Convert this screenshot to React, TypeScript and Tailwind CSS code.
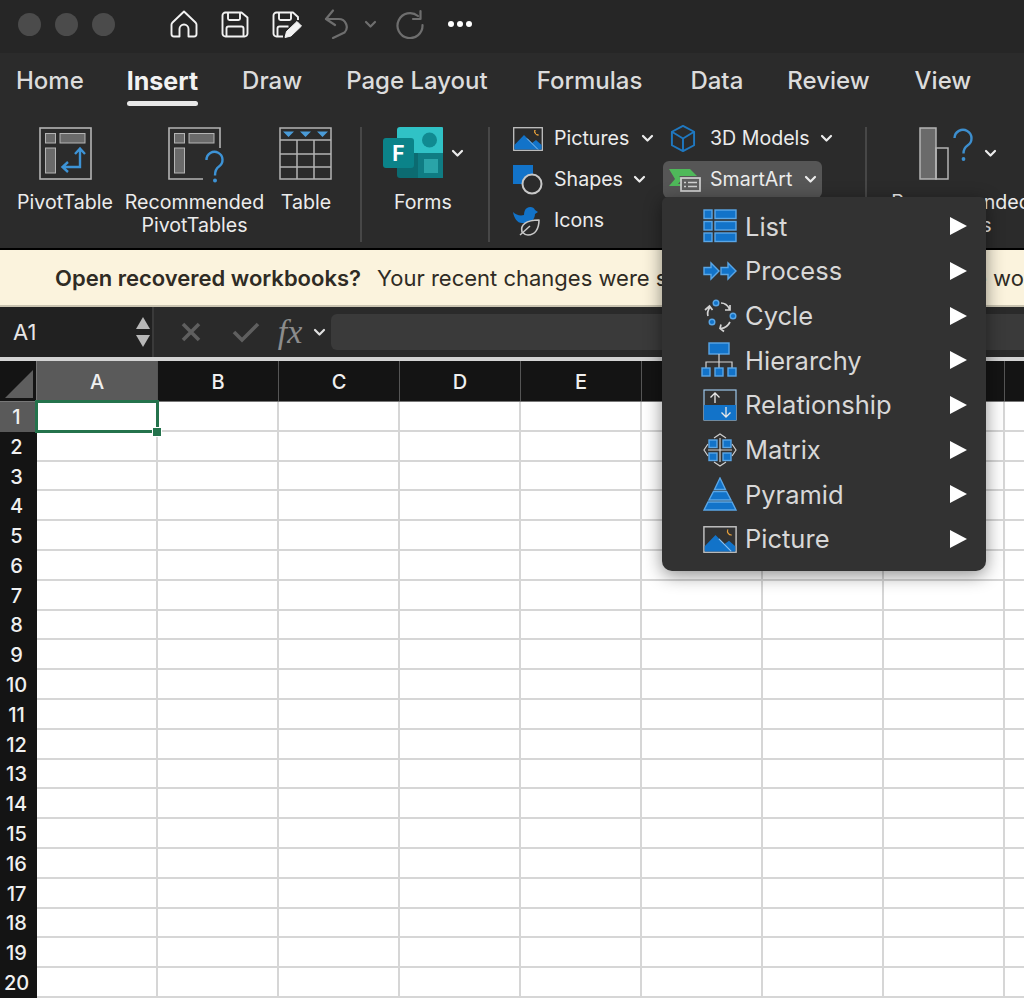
import type { ReactNode } from "react";

const BLUE = "#1273c9";
const LIGHT = "#5aa6e6";
const GRAY = "#b4b4b4";
const MID = "#6a6a6a";

const COLUMNS = ["A", "B", "C", "D", "E", "F", "G", "H", "I"];
const ROWS = Array.from({ length: 20 }, (_, i) => i + 1);
const TABS = [
  { name: "Home", className: "text-[24px] font-medium" },
  { name: "Insert", className: "ml-[43px] text-[25px] font-bold text-[#f2f2f2]" },
  { name: "Draw", className: "ml-[44px] text-[24px] font-medium" },
  { name: "Page Layout", className: "ml-[44px] text-[24px] font-medium" },
  { name: "Formulas", className: "ml-[49px] text-[24px] font-medium" },
  { name: "Data", className: "ml-[48px] text-[24px] font-medium" },
  { name: "Review", className: "ml-[44px] text-[24px] font-medium" },
  { name: "View", className: "ml-[45px] text-[24px] font-medium" },
];

function Chevron({ className = "" }: { className?: string }) {
  return (
    <svg width="13" height="9" viewBox="0 0 13 9" className={`shrink-0 ${className}`}>
      <path d="M2 2l4.500 4.500L11 2" fill="none" stroke="currentColor" strokeWidth="2.200" strokeLinecap="round" strokeLinejoin="round" />
    </svg>
  );
}

function HomeIcon() {
  return (
    <svg width="28" height="28" viewBox="0 0 28 28" fill="none" stroke="#f2f2f2" strokeWidth="1.900" strokeLinejoin="round">
      <path d="M14 1.500L2.500 12.500c-.7.7-1 1.300-1 2.300V24a2.500 2.500 0 0 0 2.500 2.500h5.500V19a4.500 4.500 0 0 1 9 0v7.500H24a2.500 2.500 0 0 0 2.500-2.500v-9.200c0-1-.3-1.600-1-2.300z" />
    </svg>
  );
}

function SaveIcon() {
  return (
    <svg width="28" height="28" viewBox="0 0 28 28" fill="none" stroke="#f2f2f2" strokeWidth="1.900" strokeLinejoin="round">
      <path d="M4 2.500h16.500l6 5v16a3 3 0 0 1-3 3h-19a3 3 0 0 1-3-3v-18a3 3 0 0 1 3-3z" />
      <path d="M7 2.500v6a1.500 1.500 0 0 0 1.500 1.500h9a1.500 1.500 0 0 0 1.500-1.500v-6" />
      <path d="M5.500 26.500v-8a2 2 0 0 1 2-2h13a2 2 0 0 1 2 2v8" />
    </svg>
  );
}

function SaveEditIcon() {
  return (
    <svg width="30" height="28" viewBox="0 0 30 28" fill="none" stroke="#f2f2f2" strokeWidth="1.900" strokeLinejoin="round">
      <path d="M11 26.500H4.500a3 3 0 0 1-3-3v-18a3 3 0 0 1 3-3H21l5 4.500v3" />
      <path d="M7 2.500v6A1.500 1.500 0 0 0 8.500 10h9A1.500 1.500 0 0 0 19 8.500v-6" />
      <path d="M5.500 26.500v-8a2 2 0 0 1 2-2h9" />
      <path d="M13 27.500l1.500-6L25 11.500l4.500 4.500-10.500 10z" fill="#f2f2f2" stroke="#f2f2f2" strokeWidth="1" />
    </svg>
  );
}

function UndoIcon() {
  return (
    <svg width="26" height="30" viewBox="0 0 26 30" fill="none" stroke="#6e6e6e" strokeWidth="2.200" strokeLinecap="round" strokeLinejoin="round">
      <path d="M2 10h12.500a8 8 0 0 1 6 13.500L9 29" />
      <path d="M9 1.500L2 10l9 6" />
    </svg>
  );
}

function RedoIcon() {
  return (
    <svg width="28" height="30" viewBox="0 0 28 30" fill="none" stroke="#6e6e6e" strokeWidth="2.200" strokeLinecap="round" strokeLinejoin="round">
      <path d="M22 7A12.500 12.500 0 1 0 26.500 16" />
      <path d="M24.500 2v8H17" />
    </svg>
  );
}

function PivotIcon() {
  return (
    <svg width="53" height="53" viewBox="0 0 53 53" fill="none">
      <rect x="1" y="1" width="51" height="51" stroke={GRAY} strokeWidth="1.600" />
      <rect x="6.500" y="6.500" width="10" height="9.500" fill={MID} stroke={GRAY} />
      <rect x="21" y="6.500" width="25" height="9.500" fill={MID} stroke={GRAY} />
      <rect x="6.500" y="21" width="10" height="25" fill={MID} stroke={GRAY} />
      <path d="M41 22v18H24M36 27l5-5.500 5 5.500M29 35l-5.500 5 5.500 5" stroke="#3d93d6" strokeWidth="2.400" />
    </svg>
  );
}

function PivotHelpIcon() {
  return (
    <svg width="57" height="57" viewBox="0 0 57 57" fill="none" className="ml-[3px]">
      <path d="M35 52H1V1h51v20" stroke={GRAY} strokeWidth="1.600" />
      <rect x="6.500" y="6.500" width="10" height="9.500" fill={MID} stroke={GRAY} />
      <rect x="21" y="6.500" width="25" height="9.500" fill={MID} stroke={GRAY} />
      <rect x="6.500" y="21" width="10" height="25" fill={MID} stroke={GRAY} />
      <path d="M38.500 33a8 8 0 1 1 12.500 6.500c-3 2-4 4-4 9" stroke="#3d93d6" strokeWidth="2.400" />
      <circle cx="47" cy="53.500" r="2" fill="#3d93d6" />
    </svg>
  );
}

function TableIcon() {
  return (
    <svg width="54" height="54" viewBox="0 0 54 54" fill="none" stroke={GRAY} strokeWidth="1.500">
      <rect x="1" y="1" width="51" height="51" />
      <path d="M1 13h51M1 27h51M1 40h51M18 13v39M35 13v39" />
      <path d="M4 4.500h11L9.500 10zM21 4.500h11L26.500 10zM38 4.500h11L43.500 10z" fill="#4a9bd8" stroke="none" />
    </svg>
  );
}

function FormsIcon() {
  return (
    <svg width="62" height="52" viewBox="0 0 62 52" className="shrink-0">
      <path d="M15 3a3 3 0 0 1 3-3h42a1 1 0 0 1 1 1v25H15z" fill="#30c2c6" />
      <circle cx="47.500" cy="13" r="7.500" fill="#108a91" />
      <rect x="36" y="26" width="25" height="25" fill="#0f7c83" />
      <path d="M15 26h21v25H18a3 3 0 0 1-3-3z" fill="#0c6b71" />
      <rect x="42" y="32" width="14" height="14" fill="#2aa4a8" />
      <rect x="1" y="11" width="31" height="30" rx="3" fill="#0b8389" />
      <text x="16.500" y="34" textAnchor="middle" fontFamily="Inter, sans-serif" fontWeight="700" fontSize="21" fill="#fff">
        F
      </text>
    </svg>
  );
}

function PictureIcon({ w = 30, h = 24 }: { w?: number; h?: number }) {
  return (
    <svg width={w} height={h} viewBox="0 0 30 24" fill="none">
      <rect x="0.700" y="0.700" width="28.600" height="22.600" stroke="#c2c2c2" strokeWidth="1.300" />
      <path d="M1.400 22.600V18L11 8l8 8 4-3 5.600 5v4.600z" fill={BLUE} />
      <path d="M14 11.500l11 11" stroke="#8ec1ee" strokeWidth="1" />
      <path d="M22 3a3.500 3.500 0 0 0 3.500 5A3.500 3.500 0 0 1 22 3z" fill="#e9a23b" stroke="#e9a23b" />
    </svg>
  );
}

function CubeIcon() {
  return (
    <svg width="26" height="27" viewBox="0 0 26 28" fill="none" stroke="#1f78c0" strokeWidth="2" strokeLinejoin="round">
      <path d="M13 1l11.500 6v14L13 27 1.500 21V7z" />
      <path d="M1.500 7L13 14l11.500-7M13 14v13" />
    </svg>
  );
}

function ShapesIcon() {
  return (
    <svg width="30" height="30" viewBox="0 0 30 30" fill="none">
      <path d="M0 0h20v9A10.500 10.500 0 0 0 9 19H0z" fill={BLUE} />
      <circle cx="19" cy="19" r="9.500" stroke="#c8c8c8" strokeWidth="2" />
    </svg>
  );
}

function IconsIcon() {
  return (
    <svg width="28" height="31" viewBox="0 0 28 31" fill="none">
      <path d="M0 7c3 3 7 4 11 3 0-3 1-6 3-7 3-2 7-1 8 2l3 2-3 2c0 5-4 9-8 9H9C4 18 1 13 0 7z" fill={BLUE} />
      <path d="M9 27c-2-7 4-12 17-12 0 9-4 15-11 15-2 0-4-1-6-3z" fill="#2b2b2b" stroke="#c8c8c8" strokeWidth="1.600" strokeLinejoin="round" />
      <path d="M7 30l10-9" stroke="#c8c8c8" strokeWidth="1.500" />
    </svg>
  );
}

function SmartArtIcon() {
  return (
    <svg width="32" height="24" viewBox="0 0 32 24" fill="none">
      <path d="M0 1h21l7 7H10l3 3-4 5h4v2H0l6-7z" fill="#4fb95a" />
      <rect x="12" y="10" width="19" height="13" fill="#5f5f5f" stroke="#d0d0d0" strokeWidth="1.700" />
      <path d="M15 14.500h2M19 14.500h9M15 18.500h2M19 18.500h9" stroke="#d0d0d0" strokeWidth="1.400" />
    </svg>
  );
}

function ChartHelpIcon() {
  return (
    <svg width="54" height="56" viewBox="0 0 54 56" fill="none" className="shrink-0">
      <rect x="1" y="1" width="16" height="51" fill={MID} stroke={GRAY} strokeWidth="1.500" />
      <rect x="17" y="21" width="12" height="31" stroke={GRAY} strokeWidth="1.500" />
      <path d="M35.500 11a8.500 8.500 0 1 1 13 7.500c-3 2-4 4-4 8" stroke="#3d8fcf" strokeWidth="2.400" />
      <circle cx="44.500" cy="32" r="1.900" fill="#3d8fcf" />
    </svg>
  );
}

function MenuIcon({ name }: { name: string }) {
  const s = { stroke: LIGHT, strokeWidth: 1.400 };
  if (name === "List")
    return (
      <svg width="34" height="34" viewBox="0 0 34 34" fill="none">
        {[1, 12.500, 24].map((y) => (
          <g key={y}>
            <rect x="1" y={y} width="8" height="8.500" fill={BLUE} {...s} />
            <rect x="12" y={y} width="21" height="8.500" fill={BLUE} {...s} />
          </g>
        ))}
      </svg>
    );
  if (name === "Process")
    return (
      <svg width="34" height="34" viewBox="0 0 34 34">
        <path d="M1 13.500h7V9l8 8-8 8v-4.500H1z" fill={BLUE} stroke={LIGHT} strokeWidth="1.400" />
        <path d="M18 13.500h7V9l8 8-8 8v-4.500h-7z" fill={BLUE} stroke={LIGHT} strokeWidth="1.400" />
      </svg>
    );
  if (name === "Cycle")
    return (
      <svg width="34" height="34" viewBox="0 0 34 34" fill="none" stroke="#d4d4d4" strokeWidth="1.700">
        <circle cx="13" cy="4" r="2.800" fill={BLUE} stroke={LIGHT} strokeWidth="1.400" />
        <circle cx="30" cy="17" r="2.800" fill={BLUE} stroke={LIGHT} strokeWidth="1.400" />
        <circle cx="9" cy="23" r="2.800" fill={BLUE} stroke={LIGHT} strokeWidth="1.400" />
        <path d="M18 4c3.500 0 6.500 2 8.500 6M27 6v5h-5M27 23c-2 4-5 6-9 6.500M18 25.500l-1 4 4 3M5 17c-1-3 0-6 2-9M2 11l4.500-4 3 4" />
      </svg>
    );
  if (name === "Hierarchy")
    return (
      <svg width="36" height="36" viewBox="0 0 36 36" fill="none">
        <rect x="8" y="1" width="20" height="11" fill={BLUE} {...s} />
        <path d="M18 12v14M5 26v-6h26v6" stroke="#d4d4d4" strokeWidth="1.200" />
        {[1, 14, 27].map((x) => (
          <rect key={x} x={x} y="26" width="8" height="8" fill={BLUE} {...s} />
        ))}
      </svg>
    );
  if (name === "Relationship")
    return (
      <svg width="34" height="32" viewBox="0 0 34 32" fill="none">
        <rect x="1" y="1" width="32" height="30" stroke="#9cc6ea" strokeWidth="1.200" />
        <rect x="1" y="16" width="32" height="15" fill={BLUE} />
        <path d="M12 14V4M7.500 8.500L12 4l4.500 4.500" stroke="#e8e8e8" strokeWidth="1.300" />
        <path d="M23 18v10M18.500 23.500L23 28l4.500-4.500" stroke="#e8e8e8" strokeWidth="1.300" />
      </svg>
    );
  if (name === "Matrix")
    return (
      <svg width="34" height="34" viewBox="0 0 34 34" fill="none">
        <path d="M11 5L17 1l6 4M5 11L1 17l4 6M29 11l4 6-4 6M11 29l6 4 6-4M17 5v24M5 17h24" stroke="#d0d0d0" strokeWidth="1.200" />
        {[
          [6, 7],
          [20, 7],
          [6, 20],
          [20, 20],
        ].map(([x, y]) => (
          <rect key={`${x}-${y}`} x={x} y={y} width="8" height="7.500" fill={BLUE} {...s} />
        ))}
      </svg>
    );
  if (name === "Pyramid")
    return (
      <svg width="34" height="34" viewBox="0 0 34 34" fill="none">
        <path d="M17 1l5.500 11.500h-11z" fill={BLUE} {...s} />
        <path d="M10.500 14.500h13l4.500 8.500H6z" fill={BLUE} {...s} />
        <path d="M5 25h24l4 8H1z" fill={BLUE} {...s} />
      </svg>
    );
  return <PictureIcon w={34} h={27} />;
}

function RibbonButton({ label, icon, className }: { label: ReactNode; icon: ReactNode; className: string }) {
  return (
    <div className={`flex shrink-0 flex-col items-center ${className}`}>
      <div className="flex h-[61px] items-start">{icon}</div>
      <div className="mt-[3px] whitespace-nowrap text-center text-[19.600px] leading-[22.500px] text-[#ececec]">{label}</div>
    </div>
  );
}

function SmallButton({
  icon,
  label,
  chevron = true,
  active = false,
  iconClass,
  labelClass,
}: {
  icon: ReactNode;
  label: string;
  chevron?: boolean;
  active?: boolean;
  iconClass: string;
  labelClass: string;
}) {
  return (
    <div className={`flex h-[37px] items-center rounded-md ${active ? "bg-[#565656]" : ""}`}>
      <div className={`flex shrink-0 items-center ${iconClass}`}>{icon}</div>
      <span className={`shrink-0 whitespace-nowrap text-[19.600px] text-[#ececec] ${labelClass}`}>{label}</span>
      {chevron && <Chevron className="text-[#ececec]" />}
    </div>
  );
}

function Separator({ className }: { className: string }) {
  return <div className={`h-[115px] w-[2px] shrink-0 bg-[#474747] ${className}`} />;
}

function Ribbon() {
  return (
    <div className="flex h-[140px] bg-[#2b2b2b] pl-[16px] pt-[19px]">
      <RibbonButton className="w-[98px]" label="PivotTable" icon={<PivotIcon />} />
      <RibbonButton
        className="ml-[11px] w-[139px]"
        label={
          <>
            Recommended
            <br />
            PivotTables
          </>
        }
        icon={<PivotHelpIcon />}
      />
      <RibbonButton className="ml-[17px] w-[50px]" label="Table" icon={<TableIcon />} />
      <Separator className="ml-[29px]" />
      <div className="ml-[20px] flex w-[85px] shrink-0 flex-col">
        <div className="flex h-[61px] items-start">
          <FormsIcon />
          <Chevron className="ml-[7px] mt-[22px] text-[#ececec]" />
        </div>
        <div className="mt-[3px] pl-[12px] text-[19.600px] leading-[22.500px] text-[#ececec]">Forms</div>
      </div>
      <Separator className="ml-[21px]" />
      <div className="ml-[2px] mt-[-7px] flex w-[171px] shrink-0 flex-col gap-[4px] pl-[21px]">
        <SmallButton icon={<PictureIcon />} iconClass="w-[41px]" label="Pictures" labelClass="w-[87px]" />
        <SmallButton icon={<ShapesIcon />} iconClass="w-[41px]" label="Shapes" labelClass="w-[79px]" />
        <SmallButton icon={<IconsIcon />} iconClass="w-[41px]" label="Icons" labelClass="" chevron={false} />
      </div>
      <div className="mt-[-7px] flex w-[159px] shrink-0 flex-col gap-[4px]">
        <SmallButton icon={<CubeIcon />} iconClass="w-[47px] pl-[7px]" label="3D Models" labelClass="w-[110px]" />
        <SmallButton active icon={<SmartArtIcon />} iconClass="w-[47px] pl-[6px]" label="SmartArt" labelClass="w-[94px]" />
      </div>
      <Separator className="ml-[43px]" />
      <div className="ml-[52px] flex shrink-0 flex-col">
        <div className="flex h-[61px] items-start">
          <ChartHelpIcon />
          <Chevron className="ml-[11px] mt-[22px] text-[#ececec]" />
        </div>
        <div className="ml-[-38px] mt-[3px] w-[160px] text-center text-[19.600px] leading-[22.500px] text-[#ececec]">
          Recommended Charts
        </div>
      </div>
    </div>
  );
}

function FormulaBar() {
  return (
    <div className="flex h-[50px] items-center bg-[#2a2a2a]">
      <div className="flex h-full w-[152px] shrink-0 items-center justify-between bg-[#212121] pl-[13px] pr-[1px]">
        <span className="text-[22px] text-[#e6e6e6]">A1</span>
        <div className="mr-[1px] flex flex-col gap-[6px]">
          <div className="h-0 w-0 border-x-[7px] border-b-[12px] border-x-transparent border-b-[#b8b8b8]" />
          <div className="h-0 w-0 border-x-[7px] border-t-[12px] border-x-transparent border-t-[#b8b8b8]" />
        </div>
      </div>
      <div className="h-full w-[2px] shrink-0 bg-[#3a3a3a]" />
      <svg width="22" height="22" viewBox="0 0 22 22" className="ml-[26px] shrink-0" stroke="#5f5f5f" strokeWidth="3.600">
        <path d="M3 3l16 16M19 3L3 19" />
      </svg>
      <svg width="28" height="22" viewBox="0 0 28 22" className="ml-[30px] shrink-0" fill="none" stroke="#5f5f5f" strokeWidth="3.600">
        <path d="M2 11l8 8L26 3" />
      </svg>
      <span className="ml-[11px] w-[38px] shrink-0 text-center font-['Liberation_Serif',serif] text-[34px] italic leading-none text-[#8c8c8c]">
        fx
      </span>
      <Chevron className="ml-[4px] text-[#e0e0e0]" />
      <div className="ml-[5px] h-[36px] flex-1 rounded-l-md bg-[#3a3a3a]" />
    </div>
  );
}

function Sheet() {
  return (
    <div className="relative">
      <div className="flex h-[41px] border-b border-b-[#777] bg-[#141414]">
        <div className="relative w-[37px] shrink-0 border-r border-r-[#777]">
          <div className="absolute bottom-[3px] right-[3px] h-0 w-0 border-b-[28px] border-l-[28px] border-b-[#5e5e5e] border-l-transparent" />
        </div>
        {COLUMNS.map((c) => (
          <div
            key={c}
            className={`flex w-[121px] shrink-0 items-center justify-center border-r border-r-[#555] pt-[2px] text-[20px] font-medium text-[#f0f0f0] ${
              c === "A" ? "bg-[#5a5a5a]" : ""
            }`}
          >
            {c}
          </div>
        ))}
      </div>
      {ROWS.map((r) => (
        <div key={r} className="flex h-[29.800px]">
          <div
            className={`flex w-[37px] shrink-0 items-center justify-center pr-[4px] text-[20px] font-medium text-[#f0f0f0] ${
              r === 1 ? "bg-[#5a5a5a]" : "bg-[#141414]"
            }`}
          >
            {r}
          </div>
          {COLUMNS.map((c) => (
            <div key={c} className="w-[121px] shrink-0 border-b-2 border-r-2 border-b-[#d6d6d6] border-r-[#d6d6d6] bg-white" />
          ))}
        </div>
      ))}
      <div className="absolute left-[35px] top-[39px] h-[33px] w-[124px] border-[3px] border-[#24734c]" />
      <div className="absolute left-[152px] top-[66px] h-[10px] w-[10px] border border-white bg-[#24734c]" />
    </div>
  );
}

function SmartArtMenu() {
  const items = ["List", "Process", "Cycle", "Hierarchy", "Relationship", "Matrix", "Pyramid", "Picture"];
  return (
    <div className="absolute left-[662px] top-[197px] w-[324px] rounded-b-[10px] rounded-t-[6px] bg-[#323232] pb-[9px] pt-[7px] shadow-[0_4px_18px_rgba(0,0,0,0.45)]">
      {items.map((item) => (
        <div key={item} className="flex h-[44.700px] items-center">
          <div className="flex w-[75px] shrink-0 justify-end">
            <MenuIcon name={item} />
          </div>
          <span className="ml-[8px] flex-1 text-[25.500px] leading-none text-[#d8d8d8]">{item}</span>
          <div className="mr-[19px] h-0 w-0 border-y-[9px] border-l-[17px] border-y-transparent border-l-white" />
        </div>
      ))}
    </div>
  );
}

export default function App() {
  return (
    <div className="relative h-[998px] w-[1024px] overflow-hidden bg-white font-['Inter',sans-serif]">
      <div className="flex h-[53px] items-center bg-[#262626] pb-[5px] pl-[18px]">
        <div className="flex gap-[14px]">
          <div className="h-[23px] w-[23px] rounded-full bg-[#4b4b4b]" />
          <div className="h-[23px] w-[23px] rounded-full bg-[#4b4b4b]" />
          <div className="h-[23px] w-[23px] rounded-full bg-[#4b4b4b]" />
        </div>
        <div className="ml-[55px] flex items-center">
          <HomeIcon />
          <div className="ml-[23px]">
            <SaveIcon />
          </div>
          <div className="ml-[23px]">
            <SaveEditIcon />
          </div>
          <div className="ml-[22px]">
            <UndoIcon />
          </div>
          <Chevron className="ml-[14px] text-[#6e6e6e]" />
          <div className="ml-[19px]">
            <RedoIcon />
          </div>
          <div className="ml-[24px] flex gap-[3px]">
            <div className="h-[6px] w-[6px] rounded-full bg-white" />
            <div className="h-[6px] w-[6px] rounded-full bg-white" />
            <div className="h-[6px] w-[6px] rounded-full bg-white" />
          </div>
        </div>
      </div>
      <div className="flex h-[55px] items-start bg-[#2b2b2b] pl-[16px] pt-[13px]">
        {TABS.map((t) => (
          <div key={t.name} className={`relative whitespace-nowrap leading-[30px] text-[#dcdcdc] ${t.className}`}>
            {t.name}
            {t.name === "Insert" && <div className="absolute inset-x-0 top-[35px] h-[5px] rounded-full bg-[#e8e8e8]" />}
          </div>
        ))}
      </div>
      <Ribbon />
      <div className="h-[2px] bg-black" />
      <div className="flex h-[57px] items-center overflow-hidden whitespace-nowrap border-b-2 border-b-[#c9c3b0] bg-[#fbf3dd] pl-[55px] pt-[2px] text-[22px] text-[#2f2b24]">
        <span className="font-semibold">Open recovered workbooks?</span>
        <span className="ml-[16px]">Your recent changes were saved.</span>
        <span className="ml-[10px]">Do you want to continue working</span>
      </div>
      <FormulaBar />
      <div className="h-[4px] bg-[#d4d4d4]" />
      <Sheet />
      <SmartArtMenu />
    </div>
  );
}
